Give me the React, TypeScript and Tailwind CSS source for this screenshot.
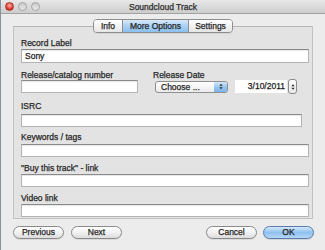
import React from "react";

function Arrows({ className = "" }: { className?: string }) {
  return (
    <svg viewBox="0 0 6 9" className={className}>
      <path d="M3 0.5 L5.5 3.5 H0.5 Z" fill="#2a2a2a" />
      <path d="M3 8.5 L5.5 5.5 H0.5 Z" fill="#2a2a2a" />
    </svg>
  );
}

const field =
  "bg-white border border-[#b4b4b4] border-t-[#8a8a8a] shadow-[inset_0_1px_1px_rgba(0,0,0,0.10)]";
const label = "text-[8.5px] leading-[9px] text-[#1e1e1e] whitespace-nowrap";
const btn =
  "h-[13px] w-[51px] rounded-full border border-[#8a8a8a] bg-gradient-to-b from-white via-[#f1f1f1] to-[#dcdcdc] text-[8.5px] leading-[11px] text-center text-[#1e1e1e] shadow-[0_1px_0_rgba(0,0,0,0.08)]";

export default function App() {
  return (
    <div className="w-[325px] h-[250px] overflow-hidden bg-[#ececec] border-l border-[#8a939c] flex flex-col font-['Liberation_Sans',Arial,sans-serif] text-[#222] [-webkit-text-stroke:0.25px_#2a2a2a]">
      {/* title bar */}
      <div className="h-[14px] shrink-0 grid grid-cols-[1fr_auto_1fr] items-center bg-gradient-to-b from-[#e8e8e8] to-[#cdcdcd] border-b border-[#a2a2a2]">
        <div className="flex items-center gap-[4px] pl-[4px]">
          <div className="w-[9px] h-[9px] rounded-full border border-[#a8342b] bg-[radial-gradient(circle_at_50%_35%,#ffb2a6,#e0352a_65%,#b8221a)]" />
          <div className="w-[9px] h-[9px] rounded-full border border-[#a3a3a3] bg-gradient-to-b from-[#c9c9c9] to-[#e9e9e9]" />
          <div className="w-[9px] h-[9px] rounded-full border border-[#a3a3a3] bg-gradient-to-b from-[#c9c9c9] to-[#e9e9e9]" />
        </div>
        <div className="text-[8.5px] leading-[10px] text-[#2e2e2e]">Soundcloud Track</div>
        <div />
      </div>

      {/* tabs */}
      <div className="mt-[5px] relative z-10 flex justify-center">
        <div className="flex h-[14px] rounded-[4px] border border-[#8d8d8d] overflow-hidden text-[8.5px] leading-[12px] text-[#1e1e1e] shadow-[0_1px_0_rgba(0,0,0,0.06)]">
          <div className="w-[28px] bg-gradient-to-b from-white to-[#e6e6e6] text-center">Info</div>
          <div className="w-[66px] border-l border-[#8d8d8d] bg-gradient-to-b from-[#d8e9f9] via-[#a9d0f4] to-[#8cc0ef] text-center">
            More Options
          </div>
          <div className="w-[44px] border-l border-[#8d8d8d] bg-gradient-to-b from-white to-[#e6e6e6] text-center">Settings</div>
        </div>
      </div>

      {/* panel */}
      <div className="mt-[-7px] ml-[12px] w-[300px] border border-[#c2c2c2] border-t-[#b5b5b5] bg-[#e3e3e3] pt-[12px] pl-[7px] pr-[3px] pb-[1px]">
        <div className={label}>Record Label</div>
        <div className={`mt-[1px] h-[14px] w-[288px] ${field} shadow-[0_0_0_2px_#86addf] text-[8.5px] leading-[12px] pl-[3px] text-[#111]`}>
          Sony
        </div>

        <div className="mt-[8px] flex">
          <div className="w-[117px]">
            <div className={label}>Release/catalog number</div>
            <div className={`h-[13px] w-[117px] ${field}`} />
          </div>
          <div className="ml-[15px]">
            <div className={label}>Release Date</div>
            <div className="h-[13px] flex items-center">
              <div className="ml-[2px] h-[12px] w-[73px] flex rounded-[3px] border border-[#8f8f8f] overflow-hidden bg-gradient-to-b from-white to-[#ececec]">
                <div className="flex-1 text-[8.5px] leading-[10px] pl-[5px] text-[#1e1e1e]">Choose ...</div>
                <div className="w-[13px] flex items-center justify-center bg-gradient-to-b from-[#d3e6f8] via-[#98c6f0] to-[#7cb3e6]">
                  <Arrows className="w-[4px] h-[7px]" />
                </div>
              </div>
              <div className="ml-[7px] h-[13px] w-[52px] bg-white text-[8.5px] leading-[13px] text-right pr-[2px] text-[#111]">
                3/10/2011
              </div>
              <div className="ml-[1px] h-[15px] w-[9px] rounded-[3px] border border-[#8a8a8a] bg-gradient-to-b from-white to-[#e8e8e8] flex items-center justify-center">
                <Arrows className="w-[4px] h-[8px]" />
              </div>
            </div>
          </div>
        </div>

        <div className="mt-[9px]">
          <div className={label}>ISRC</div>
          <div className={`mt-[3px] h-[13px] w-[281px] ${field}`} />
        </div>

        <div className="mt-[6px]">
          <div className={label}>Keywords / tags</div>
          <div className={`mt-[2px] h-[13px] w-[288px] ${field}`} />
        </div>

        <div className="mt-[7px]">
          <div className={label}>"Buy this track" - link</div>
          <div className={`mt-[1px] h-[13px] w-[288px] ${field}`} />
        </div>

        <div className="mt-[7px]">
          <div className={label}>Video link</div>
          <div className={`mt-[1px] h-[13px] w-[288px] ${field}`} />
        </div>
      </div>

      {/* buttons */}
      <div className="mt-[7px] flex justify-between pl-[12px] pr-[11px]">
        <div className="flex gap-[7px]">
          <div className={`${btn} w-[50px]`}>Previous</div>
          <div className={btn}>Next</div>
        </div>
        <div className="flex gap-[6px]">
          <div className={btn}>Cancel</div>
          <div className="h-[13px] w-[51px] rounded-full border border-[#5a7cab] bg-gradient-to-b from-[#d5e8fa] via-[#8fc1f0] to-[#b3d6f7] text-[8.5px] leading-[11px] text-center text-[#111] shadow-[0_1px_0_rgba(0,0,0,0.1)]">
            OK
          </div>
        </div>
      </div>
    </div>
  );
}
